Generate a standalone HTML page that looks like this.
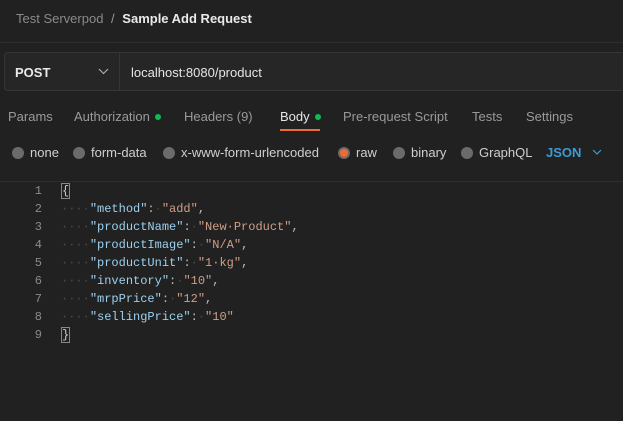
<!DOCTYPE html>
<html><head><style>
*{margin:0;padding:0;box-sizing:border-box}
body{width:623px;height:421px;background:#212121;font-family:"Liberation Sans",sans-serif;position:relative;overflow:hidden;color:#a6a6a6}
.a{position:absolute;white-space:nowrap}
.dot{display:inline-block;width:6px;height:6px;border-radius:50%;background:#0cbb52;margin-left:5px;vertical-align:middle;position:relative;top:-1px}
.r{display:inline-block;width:12px;height:12px;border-radius:50%;background:#6b6b6b;vertical-align:middle;margin-right:6px;position:relative;top:-1px}
.code{font-family:"Liberation Mono",monospace;font-size:12px;line-height:18px}
.k{color:#9cd0ef}.v{color:#cf9e86}.p{color:#bbb}.ws{color:#4a4a4a}
</style></head><body>
<div class="a" style="left:16px;top:11px;font-size:13px;color:#8a8a8a">Test Serverpod <span style="color:#999;margin:0 4px">/</span> <span style="color:#eaeaea;font-weight:bold">Sample Add Request</span></div>
<div class="a" style="left:0;top:42px;width:623px;height:1px;background:#2e2e2e"></div>
<div class="a" style="left:4px;top:52px;width:625px;height:39px;background:#262626;border:1px solid #353535;border-radius:4px"></div>
<div class="a" style="left:119px;top:53px;width:1px;height:37px;background:#353535"></div>
<div class="a" style="left:15px;top:65px;font-size:13px;font-weight:bold;color:#eaeaea">POST</div>
<svg class="a" style="left:98px;top:68px" width="11" height="7"><path d="M1 1L5.5 5.5L10 1" stroke="#aaa" fill="none" stroke-width="1.2"/></svg>
<div class="a" style="left:131px;top:65px;font-size:13px;color:#e6e6e6">localhost:8080/product</div>
<div class="a" style="left:8px;top:109px;font-size:13px;color:#9a9a9a">Params</div>
<div class="a" style="left:74px;top:109px;font-size:13px;color:#9a9a9a">Authorization<span class="dot"></span></div>
<div class="a" style="left:184px;top:109px;font-size:13px;color:#9a9a9a">Headers (9)</div>
<div class="a" style="left:280px;top:109px;font-size:13px;color:#e6e6e6">Body<span class="dot"></span></div>
<div class="a" style="left:280px;top:129px;width:40px;height:2px;background:#ef6b35"></div>
<div class="a" style="left:343px;top:109px;font-size:13px;color:#9a9a9a">Pre-request Script</div>
<div class="a" style="left:472px;top:109px;font-size:13px;color:#9a9a9a">Tests</div>
<div class="a" style="left:526px;top:109px;font-size:13px;color:#9a9a9a">Settings</div>
<div class="a" style="left:12px;top:145px;font-size:13px;color:#cfcfcf"><span class="r"></span>none</div>
<div class="a" style="left:73px;top:145px;font-size:13px;color:#cfcfcf"><span class="r"></span>form-data</div>
<div class="a" style="left:163px;top:145px;font-size:13px;color:#cfcfcf"><span class="r"></span>x-www-form-urlencoded</div>
<div class="a" style="left:338px;top:145px;font-size:13px;color:#cfcfcf"><span class="r" style="background:#ef6b35;border:2px solid #6b6b6b"></span>raw</div>
<div class="a" style="left:393px;top:145px;font-size:13px;color:#cfcfcf"><span class="r"></span>binary</div>
<div class="a" style="left:461px;top:145px;font-size:13px;color:#cfcfcf"><span class="r"></span>GraphQL</div>
<div class="a" style="left:546px;top:145px;font-size:13px;font-weight:bold;color:#3d9bd4">JSON</div>
<svg class="a" style="left:592px;top:149px" width="10" height="7"><path d="M1 1L5 5L9 1" stroke="#3d9bd4" fill="none" stroke-width="1.2"/></svg>
<div class="a" style="left:0;top:181px;width:623px;height:1px;background:#2e2e2e"></div>
<div class="a code" style="left:28px;top:182px;color:#8a8a8a;text-align:right;width:14px">1<br>2<br>3<br>4<br>5<br>6<br>7<br>8<br>9</div>
<div class="a code" style="left:61px;top:182px;color:#ccc">
<span style="border:1px solid #888">{</span><br>
<span class="ws">····</span><span class="k">"method"</span><span class="p">:</span><span class="ws">·</span><span class="v">"add"</span><span class="p">,</span><br>
<span class="ws">····</span><span class="k">"productName"</span><span class="p">:</span><span class="ws">·</span><span class="v">"New·Product"</span><span class="p">,</span><br>
<span class="ws">····</span><span class="k">"productImage"</span><span class="p">:</span><span class="ws">·</span><span class="v">"N/A"</span><span class="p">,</span><br>
<span class="ws">····</span><span class="k">"productUnit"</span><span class="p">:</span><span class="ws">·</span><span class="v">"1·kg"</span><span class="p">,</span><br>
<span class="ws">····</span><span class="k">"inventory"</span><span class="p">:</span><span class="ws">·</span><span class="v">"10"</span><span class="p">,</span><br>
<span class="ws">····</span><span class="k">"mrpPrice"</span><span class="p">:</span><span class="ws">·</span><span class="v">"12"</span><span class="p">,</span><br>
<span class="ws">····</span><span class="k">"sellingPrice"</span><span class="p">:</span><span class="ws">·</span><span class="v">"10"</span><br>
<span style="border:1px solid #888">}</span>
</div>
</body></html>
